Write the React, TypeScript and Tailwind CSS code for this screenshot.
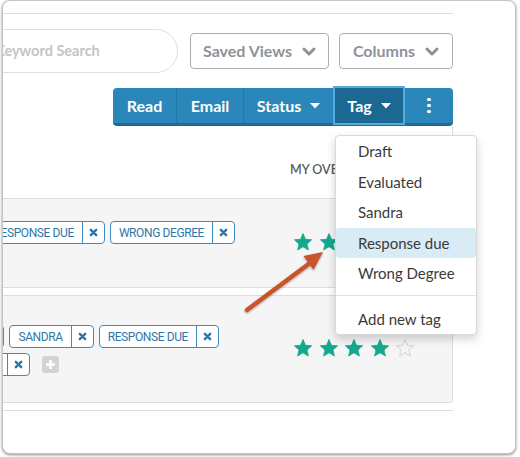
import React from "react";

const XIcon = () => (
  <svg width="9" height="9" viewBox="0 0 10 10">
    <path d="M2 2 L8 8 M8 2 L2 8" stroke="#2f76a8" strokeWidth="2.6" strokeLinecap="round" />
  </svg>
);

const Tag = ({ label }: { label: string }) => (
  <div className="flex h-[23px] shrink-0 items-stretch rounded-[4px] border border-[#3b8cc2] bg-white">
    <span
      className="flex items-center whitespace-nowrap px-[8px] text-[12px] tracking-[-0.4px] text-[#2f76a8]"
      style={{ fontFamily: "Roboto, 'Open Sans', sans-serif" }}
    >
      {label}
    </span>
    <span className="flex w-[22px] items-center justify-center border-l border-[#3b8cc2]">
      <XIcon />
    </span>
  </div>
);

const Star = ({ filled }: { filled: boolean }) => (
  <svg width="20" height="20" viewBox="0 0 24 24">
    <path
      d="M12 1.8l3 7 7.4.6-5.6 4.9 1.7 7.3L12 17.7l-6.5 3.9 1.7-7.3L1.6 9.4 9 8.8z"
      fill={filled ? "#14a88f" : "none"}
      stroke={filled ? "#14a88f" : "#d9d9d9"}
      strokeWidth={filled ? 1 : 1.4}
      strokeLinejoin="round"
    />
  </svg>
);

const Stars = ({ n, total }: { n: number; total: number }) => (
  <div className="flex gap-[5.5px]">
    {Array.from({ length: total }).map((_, i) => (
      <Star key={i} filled={i < n} />
    ))}
  </div>
);

const Chevron = () => (
  <svg width="14" height="9" viewBox="0 0 14 9">
    <path d="M2 2 L7 7 L12 2" fill="none" stroke="#8c939a" strokeWidth="3" strokeLinecap="round" strokeLinejoin="round" />
  </svg>
);

const Caret = () => (
  <svg width="10" height="6" viewBox="0 0 10 6">
    <path d="M0 0 L10 0 L5 5.5 Z" fill="#ffffff" />
  </svg>
);

export default function App() {
  return (
    <div className="relative h-[457px] w-[520px] overflow-hidden bg-white" style={{ fontFamily: "Lato, 'Open Sans', sans-serif" }}>
      <div className="ml-[2px] h-[454px] w-[514px] overflow-hidden rounded-[8px] border border-[#c4c4c4] bg-white shadow-[0_1px_3px_rgba(0,0,0,0.45)]">
        <div className="w-[450px]">
          <div className="mt-[12px] h-px bg-[#dddddd]" />
          {/* search row */}
          <div className="mt-[15px] flex h-[44px] items-center">
            <div className="-ml-[30px] flex h-[44px] w-[205px] shrink-0 items-center whitespace-nowrap rounded-full border border-[#dedede] pl-[21px] text-[14.5px] font-bold text-[#c4c4c4]">
              Keyword Search
            </div>
            <div className="ml-[12px] flex h-[36px] w-[139px] shrink-0 items-center justify-center gap-[10px] whitespace-nowrap rounded-[4px] border border-[#a9afb6] text-[16px] font-bold text-[#8c939a]">
              Saved Views <Chevron />
            </div>
            <div className="ml-[10px] flex h-[36px] w-[114px] shrink-0 items-center justify-center gap-[10px] whitespace-nowrap rounded-[4px] border border-[#a9afb6] text-[16px] font-bold text-[#8c939a]">
              Columns <Chevron />
            </div>
          </div>
          {/* action group */}
          <div className="mt-[15px] flex justify-end">
            <div className="flex h-[38px] rounded-[4px] border-b-[3px] border-[#1f6a94] bg-[#2b87b9] text-[16px] font-bold text-white">
              <div className="flex w-[64px] items-center justify-center border-r border-[#2478a6]">Read</div>
              <div className="flex w-[67px] items-center justify-center border-r border-[#2478a6]">Email</div>
              <div className="flex w-[89px] items-center justify-center gap-[9px]">
                Status <Caret />
              </div>
              <div className="relative z-10 -mb-[2px] -mt-[2px] flex w-[72px] items-center justify-center gap-[9px] border-2 border-[#55aae2] bg-[#1b6892]">
                Tag <Caret />
              </div>
              <div className="flex w-[48px] items-center justify-center">
                <div className="flex flex-col gap-[2.5px]">
                  <span className="h-[3.5px] w-[3.5px] rounded-full bg-white" />
                  <span className="h-[3.5px] w-[3.5px] rounded-full bg-white" />
                  <span className="h-[3.5px] w-[3.5px] rounded-full bg-white" />
                </div>
              </div>
            </div>
          </div>
          {/* table */}
          <div className="rounded-br-[3px] border-b border-r border-[#dddddd]">
            <div className="h-[72px] whitespace-nowrap pl-[287px] pt-[35px] text-[12.5px] font-semibold uppercase text-[#555b60]">My Overall</div>
            <div className="flex h-[90px] border-y border-[#dddddd] bg-[#f5f5f5]">
              <div className="w-[290px] shrink-0 pt-[22px]">
                <div className="flex w-[232px] justify-end gap-[5px]">
                  <Tag label="DRAFT" />
                  <Tag label="RESPONSE DUE" />
                  <Tag label="WRONG DEGREE" />
                </div>
              </div>
              <div className="pt-[33px]">
                <Stars n={2} total={2} />
              </div>
            </div>
            <div className="h-[7px] bg-white" />
            <div className="flex h-[107px] border-t border-[#dddddd] bg-[#f5f5f5]">
              <div className="w-[290px] shrink-0 pt-[29px]">
                <div className="flex w-[216px] justify-end gap-[5px]">
                  <Tag label="DRAFT" />
                  <Tag label="SANDRA" />
                  <Tag label="RESPONSE DUE" />
                </div>
                <div className="mt-[5px] flex w-[56px] items-center justify-end gap-[12px]">
                  <Tag label="EVALUATED" />
                  <div className="flex h-[17px] w-[17px] shrink-0 items-center justify-center rounded-[3px] bg-[#d3d3d3]">
                    <svg width="11" height="11" viewBox="0 0 11 11">
                      <path d="M5.5 1 V10 M1 5.5 H10" stroke="#fff" strokeWidth="2.6" />
                    </svg>
                  </div>
                </div>
              </div>
              <div className="pt-[42px]">
                <Stars n={4} total={5} />
              </div>
            </div>
          </div>
          <div className="mt-[7px] h-px bg-[#dddddd]" />
        </div>
      </div>

      {/* arrow */}
      <svg className="pointer-events-none absolute left-0 top-0" width="520" height="457">
        <defs>
          <filter id="sh" x="-20%" y="-20%" width="140%" height="140%">
            <feDropShadow dx="0" dy="1" stdDeviation="1" floodColor="#000" floodOpacity="0.35" />
          </filter>
        </defs>
        <g filter="url(#sh)">
          <line x1="247" y1="310" x2="310" y2="263" stroke="#c9522b" strokeWidth="4.5" strokeLinecap="round" />
          <polygon points="323,252 303.5,256 313.5,270" fill="#c9522b" />
        </g>
      </svg>

      {/* dropdown */}
      <div className="absolute left-[335px] top-[135px] w-[142px] rounded-[4px] border border-[#d9d9d9] bg-white text-[15px] text-[#3a3a3a] shadow-[0_4px_10px_rgba(0,0,0,0.18)]">
        <div className="flex h-[30.5px] items-center pl-[22px]">Draft</div>
        <div className="flex h-[30.5px] items-center pl-[22px]">Evaluated</div>
        <div className="flex h-[30.5px] items-center pl-[22px]">Sandra</div>
        <div className="flex h-[30.5px] items-center rounded-[3px] bg-[#d9ebf5] pl-[22px]">Response due</div>
        <div className="flex h-[30.5px] items-center pl-[22px]">Wrong Degree</div>
        <div className="mb-[9px] mt-[6px] h-px bg-[#e2e2e2]" />
        <div className="flex h-[29px] items-center pl-[22px]">Add new tag</div>
      </div>
    </div>
  );
}
